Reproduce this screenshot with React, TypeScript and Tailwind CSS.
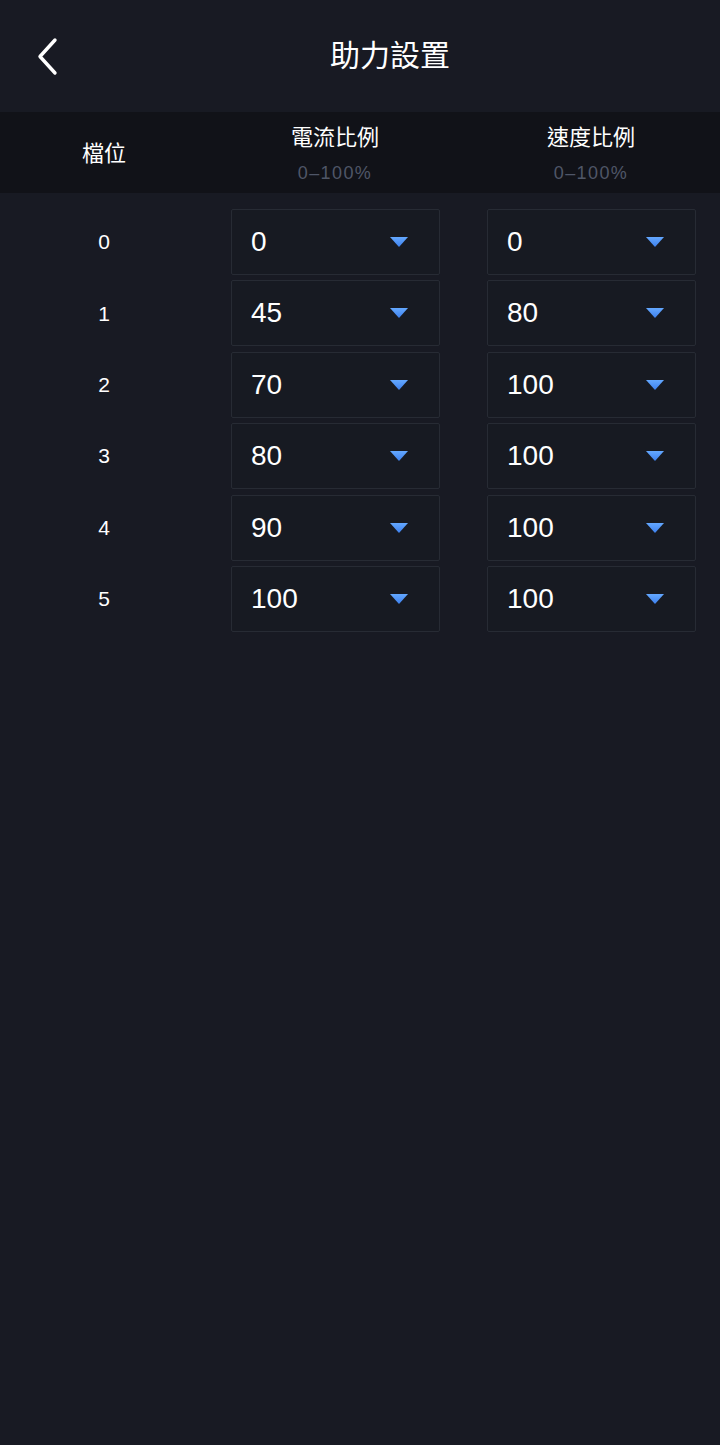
const rows = [
  {level: 0, current: 0, speed: 0},
  {level: 1, current: 45, speed: 80},
  {level: 2, current: 70, speed: 100},
  {level: 3, current: 80, speed: 100},
  {level: 4, current: 90, speed: 100},
  {level: 5, current: 100, speed: 100},
]

const font = {fontFamily: '"Liberation Sans", "Noto Sans CJK TC", sans-serif'}

const Caret = () => (
  <svg width="18" height="10" viewBox="0 0 18 10">
    <defs>
      <linearGradient id="caretFill" x1="0" y1="0" x2="0" y2="1">
        <stop offset="0" stopColor="#64a8ff" />
        <stop offset="1" stopColor="#3d80ee" />
      </linearGradient>
    </defs>
    <polygon points="0,0 18,0 9,10" fill="url(#caretFill)" />
  </svg>
)

const Select = ({value}: {value: number}) => (
  <div className="h-[66px] border border-[#272b34] rounded-[2px] bg-[#171a22] flex items-center justify-between pl-[19px] pr-[31px]">
    <span className="text-[28px] text-white leading-none">{value}</span>
    <Caret />
  </div>
)

const ColHead = ({title}: {title: string}) => (
  <div className="flex flex-col items-center pr-[2px] pt-[2px]">
    <span className="text-[22px] leading-[28px]">{title}</span>
    <span className="text-[18px] text-[#4f5667] leading-[22px] mt-[10px] tracking-[1.4px]">0–100%</span>
  </div>
)

export default function App() {
  return (
    <div className="min-h-[1445px] w-[720px] bg-[#181a23] text-white" style={font}>
      <div className="h-[112px] relative flex items-center justify-center">
        <svg className="absolute left-[36px] top-[36px]" width="24" height="40" viewBox="0 0 24 40">
          <polyline
            points="19,4 4,20.5 19,37"
            fill="none"
            stroke="white"
            strokeWidth="3.4"
            strokeLinecap="round"
            strokeLinejoin="round"
          />
        </svg>
        <h1 className="text-[30px] font-normal pl-[60px] -mt-[1px]">助力設置</h1>
      </div>

      <div className="h-[81px] bg-[#111218] grid grid-cols-[208px_256px_256px] items-center">
        <div className="text-center text-[22px] pt-[1px]">檔位</div>
        <ColHead title="電流比例" />
        <ColHead title="速度比例" />
      </div>

      <div className="pt-[16px] flex flex-col gap-[5.4px]">
        {rows.map(r => (
          <div key={r.level} className="grid grid-cols-[208px_256px_256px] items-center">
            <div className="text-center text-[21px]">{r.level}</div>
            <div className="pl-[23px] pr-[24px]">
              <Select value={r.current} />
            </div>
            <div className="pl-[23px] pr-[24px]">
              <Select value={r.speed} />
            </div>
          </div>
        ))}
      </div>
    </div>
  )
}
